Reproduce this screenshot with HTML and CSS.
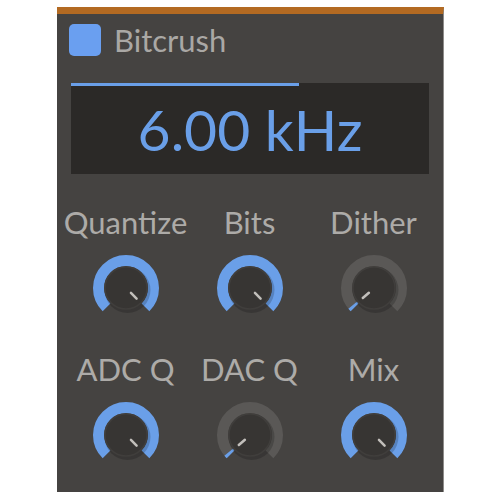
FILE: index.html
```html
<!DOCTYPE html>
<html lang="en">
<head>
    <meta charset="UTF-8">
    <meta name="viewport" content="width=device-width, initial-scale=1.0">
    <title>Bitcrush</title>
    <link rel="stylesheet" href="styles.css">
</head>
<body>
    <div class="panel">
        <div class="header">
            <span class="toggle"></span>
            <span class="title">Bitcrush</span>
        </div>

        <div class="display">
            <div class="display-bar"></div>
            <div class="display-value">6.00 kHz</div>
        </div>

        <div class="knobs">
            <div class="knob-cell">
                <div class="knob-label">Quantize</div>
                <svg class="knob" viewBox="0 0 70 70" width="70" height="70">
                    <path class="ring-on" d="M 15.555 54.445 A 27.5 27.5 0 1 1 54.445 54.445"/>
                    <circle class="shade" cx="36.5" cy="37" r="23"/>
                    <circle class="cap" cx="35" cy="35" r="21"/>
                    <line class="pointer" x1="39.95" y1="39.95" x2="45.6" y2="45.6"/>
                </svg>
            </div>
            <div class="knob-cell">
                <div class="knob-label">Bits</div>
                <svg class="knob" viewBox="0 0 70 70" width="70" height="70">
                    <path class="ring-on" d="M 15.555 54.445 A 27.5 27.5 0 1 1 54.445 54.445"/>
                    <circle class="shade" cx="36.5" cy="37" r="23"/>
                    <circle class="cap" cx="35" cy="35" r="21"/>
                    <line class="pointer" x1="39.95" y1="39.95" x2="45.6" y2="45.6"/>
                </svg>
            </div>
            <div class="knob-cell">
                <div class="knob-label">Dither</div>
                <svg class="knob" viewBox="0 0 70 70" width="70" height="70">
                    <path class="ring-off" d="M 15.555 54.445 A 27.5 27.5 0 1 1 54.445 54.445"/>
                    <path class="ring-on" d="M 15.555 54.445 A 27.5 27.5 0 0 1 13.63 52.31"/>
                    <circle class="shade" cx="36.5" cy="37" r="23"/>
                    <circle class="cap" cx="35" cy="35" r="21"/>
                    <line class="pointer" x1="29.9" y1="39.7" x2="23.8" y2="45"/>
                </svg>
            </div>

            <div class="knob-cell">
                <div class="knob-label">ADC Q</div>
                <svg class="knob" viewBox="0 0 70 70" width="70" height="70">
                    <path class="ring-on" d="M 15.555 54.445 A 27.5 27.5 0 1 1 54.445 54.445"/>
                    <circle class="shade" cx="36.5" cy="37" r="23"/>
                    <circle class="cap" cx="35" cy="35" r="21"/>
                    <line class="pointer" x1="39.95" y1="39.95" x2="45.6" y2="45.6"/>
                </svg>
            </div>
            <div class="knob-cell">
                <div class="knob-label">DAC Q</div>
                <svg class="knob" viewBox="0 0 70 70" width="70" height="70">
                    <path class="ring-off" d="M 15.555 54.445 A 27.5 27.5 0 1 1 54.445 54.445"/>
                    <path class="ring-on" d="M 15.555 54.445 A 27.5 27.5 0 0 1 13.63 52.31"/>
                    <circle class="shade" cx="36.5" cy="37" r="23"/>
                    <circle class="cap" cx="35" cy="35" r="21"/>
                    <line class="pointer" x1="29.9" y1="39.7" x2="23.8" y2="45"/>
                </svg>
            </div>
            <div class="knob-cell">
                <div class="knob-label">Mix</div>
                <svg class="knob" viewBox="0 0 70 70" width="70" height="70">
                    <path class="ring-on" d="M 15.555 54.445 A 27.5 27.5 0 1 1 54.445 54.445"/>
                    <circle class="shade" cx="36.5" cy="37" r="23"/>
                    <circle class="cap" cx="35" cy="35" r="21"/>
                    <line class="pointer" x1="39.95" y1="39.95" x2="45.6" y2="45.6"/>
                </svg>
            </div>
        </div>
    </div>
</body>
</html>
```

FILE: styles.css
```css
body {
    margin: 0;
    padding: 0;
    background: #ffffff;
    font-family: Lato, "Open Sans", sans-serif;
}

.panel {
    box-sizing: border-box;
    width: 387px;
    height: 485px;
    margin: 7px 0 0 57px;
    background-color: #454341;
    border-top: 7px solid #b36a22;
    border-right: 1px solid #8e8c8a;
}

.header {
    display: flex;
    align-items: center;
    gap: 13px;
    height: 69px;
    padding: 0 12px 17px;
    box-sizing: border-box;
}

.toggle {
    width: 32px;
    height: 32px;
    border-radius: 5px;
    background-color: #6a9ff0;
}

.title {
    font-size: 31px;
    line-height: 36px;
    color: #aaa8a5;
}

.display {
    margin: 0 14px;
    height: 91px;
    background-color: #2b2927;
    display: flex;
    flex-direction: column;
}

.display-bar {
    width: 228px;
    height: 3px;
    background-color: #6a9fe8;
}

.display-value {
    flex: 1;
    display: flex;
    align-items: center;
    justify-content: center;
    font-size: 57px;
    color: #6a9fe8;
    padding-bottom: 3px;
}

.knobs {
    display: grid;
    grid-template-columns: repeat(3, 124px);
    justify-content: center;
    row-gap: 28px;
    margin-top: 30px;
    margin-left: -1px;
}

.knob-cell {
    display: flex;
    flex-direction: column;
    align-items: center;
    gap: 13px;
}

.knob-label {
    font-size: 31px;
    line-height: 36px;
    color: #adaba8;
    white-space: nowrap;
}

.knob {
    display: block;
}

.ring-on,
.ring-off {
    fill: none;
    stroke-width: 11;
    stroke-linecap: butt;
}

.ring-on {
    stroke: #6a9fe8;
}

.ring-off {
    stroke: #5a5856;
}

.shade {
    fill: rgba(0, 0, 0, 0.18);
}

.cap {
    fill: #373533;
    stroke: #403e3c;
    stroke-width: 1.5;
}

.pointer {
    stroke: #c2bfbb;
    stroke-width: 2.5;
    stroke-linecap: round;
}
```
